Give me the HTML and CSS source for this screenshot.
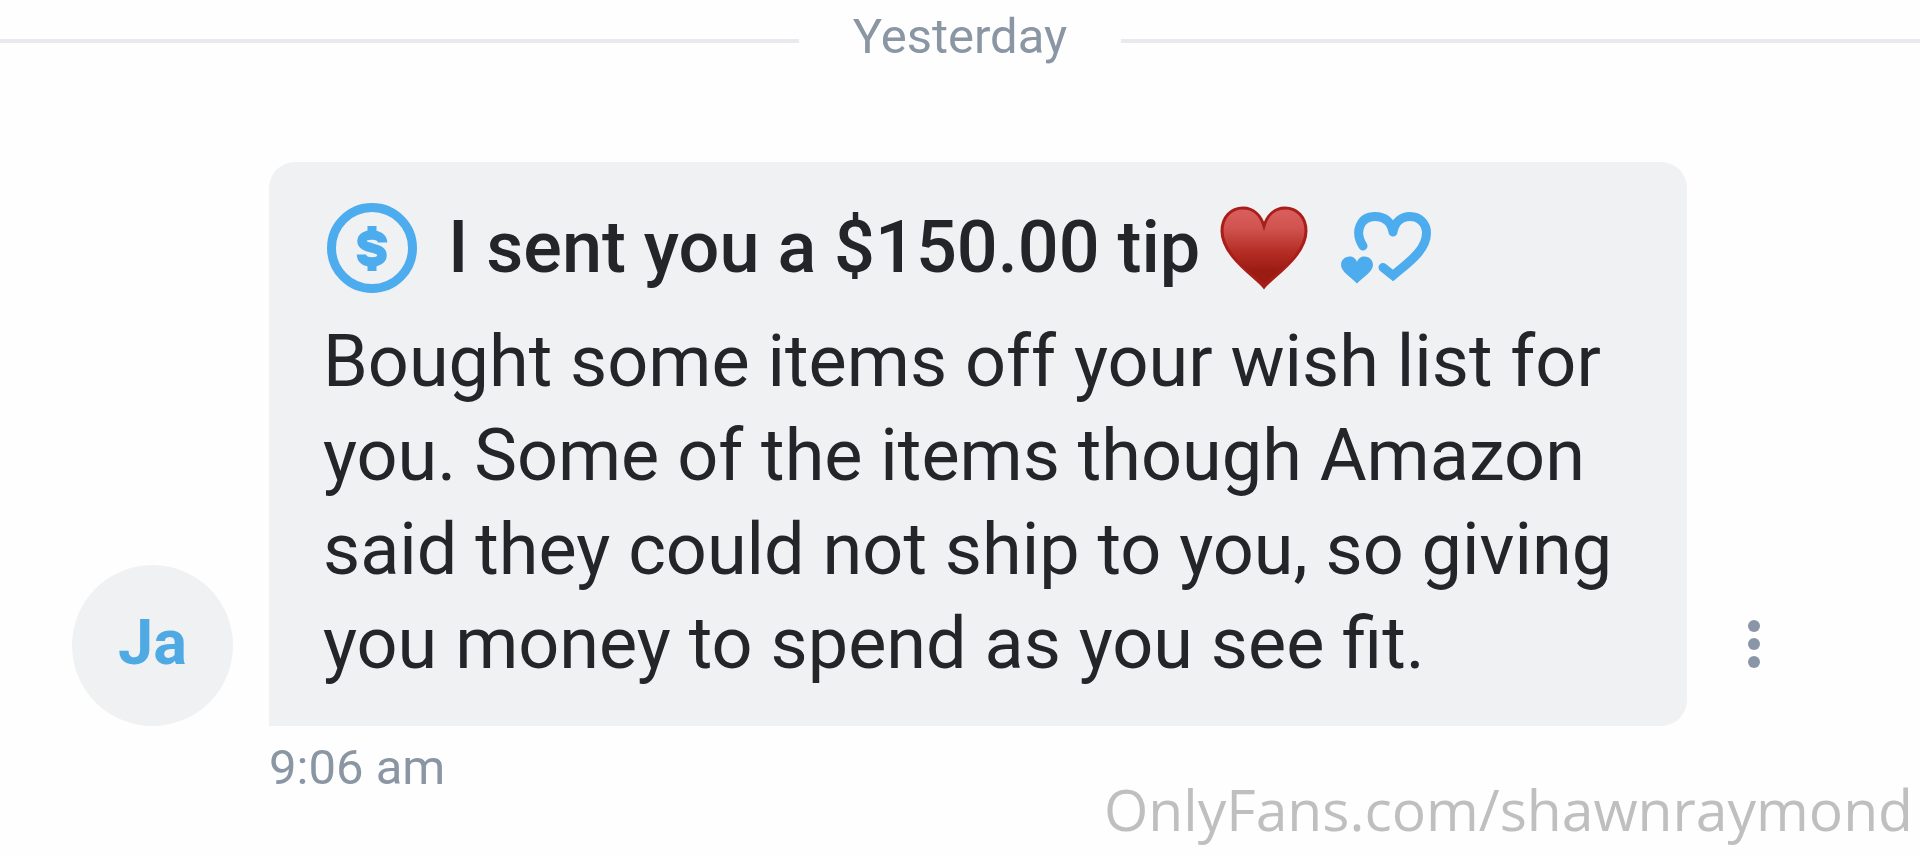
FILE: index.html
```html
<!DOCTYPE html>
<html lang="en">
<head>
    <meta charset="UTF-8" />
    <meta name="viewport" content="width=device-width, initial-scale=1.0"/>
    <title>Messages</title>
    <link rel="stylesheet" href="styles.css">
</head>
<body>

    <main class="chat">
        <div class="day-divider"><span>Yesterday</span></div>

        <article class="message">
            <a href="#" class="avatar">Ja</a>

            <div class="bubble">
                <h2 class="tip-title">
                    <svg class="icon-coin" viewBox="0 0 90 90" aria-hidden="true">
                        <circle cx="45" cy="45" r="40.5" fill="none" stroke="currentColor" stroke-width="9"/>
                        <rect x="40.5" y="23" width="9" height="8" fill="currentColor"/>
                        <rect x="40.5" y="59" width="9" height="9" fill="currentColor"/>
                        <path d="M55.5 39.5C55.5 34.5 51 32 45 32C39 32 35 34 35 38C35 46.5 55 43.5 55 52C55 56.5 51 59 45 59C38.5 59 34.5 56.5 34.5 51.5" fill="none" stroke="currentColor" stroke-width="9.5"/>
                    </svg>
                    <span>I sent you a $150.00 tip</span>
                    <svg class="icon-heart" viewBox="0 0 88 84" aria-hidden="true">
                        <defs>
                            <linearGradient id="heartFill" x1="0" y1="0" x2="0" y2="1">
                                <stop offset="0" stop-color="#d95f5f"/>
                                <stop offset="0.25" stop-color="#d15450"/>
                                <stop offset="0.55" stop-color="#b52e26"/>
                                <stop offset="0.8" stop-color="#9a1b12"/>
                                <stop offset="1" stop-color="#9c1d14"/>
                            </linearGradient>
                        </defs>
                        <path d="M44 81C36 71 2 50 2 25C2 11 11 2 23 2C34 2 41 10 44 20C47 10 54 2 65 2C77 2 86 11 86 25C86 50 52 71 44 81Z" fill="url(#heartFill)" stroke="#a91e18" stroke-width="3"/>
                    </svg>
                    <svg class="icon-hearts" viewBox="0 0 90 72" aria-hidden="true">
                        <path d="M22 34C13 20 19 4.5 34 4.5C43 4.5 50 9 52 20M52 20C54 9 61 4.5 69 4.5C79 4.5 85.5 12 85.5 21C85.5 38 68 50 52 63.5L42 55.5" fill="none" stroke="currentColor" stroke-width="9" stroke-linecap="round" stroke-linejoin="miter"/>
                        <path d="M16 71.5C11 66 0 60 0 53C0 48 4 44.5 8.5 44.5C12 44.5 15 46.5 16 50C17 46.5 20 44.5 23.5 44.5C28 44.5 32 48 32 53C32 60 21 66 16 71.5Z" fill="currentColor"/>
                    </svg>
                </h2>
                <p class="message-text">Bought some items off your wish list for you. Some of the items though Amazon said they could not ship to you, so giving you money to spend as you see fit.</p>
            </div>

            <button type="button" class="menu-button" aria-label="More options">
                <svg viewBox="0 0 12 48" aria-hidden="true">
                    <circle cx="6" cy="6" r="6"/>
                    <circle cx="6" cy="24" r="6"/>
                    <circle cx="6" cy="42" r="6"/>
                </svg>
            </button>

            <time class="message-time" datetime="09:06">9:06 am</time>
        </article>
    </main>

    <div class="watermark">OnlyFans.com/shawnraymond</div>

</body>
</html>
```
FILE: styles.css
```css
body {
    font-family: Roboto, "Liberation Sans", sans-serif;
    background: #fefefe;
    color: #242529;
    margin: 0;
}

.chat {
    padding-top: 7px;
}

.day-divider {
    display: flex;
    align-items: center;
    gap: 54px;
    color: #8a96a3;
    font-size: 49px;
    line-height: 60px;
    margin-bottom: 87px;
}

.day-divider::before,
.day-divider::after {
    content: "";
    flex: 1;
    height: 4px;
    background: #e9eaed;
}

.day-divider span {
    padding-bottom: 8px;
}

.message {
    display: grid;
    grid-template-columns: 161px 1fr 134px;
    align-items: end;
    padding: 0 99px 0 72px;
}

.avatar {
    display: flex;
    align-items: center;
    justify-content: center;
    box-sizing: border-box;
    height: 161px;
    padding-bottom: 6px;
    border-radius: 50%;
    background: #f0f1f3;
    color: #4fa9e3;
    font-size: 63px;
    font-weight: bold;
    text-decoration: none;
}

.bubble {
    margin-left: 36px;
    padding: 39px 54px 35px;
    border-radius: 26px 26px 26px 0;
    background: #f0f1f3;
    font-size: 72px;
    line-height: 94px;
}

.tip-title {
    display: flex;
    align-items: center;
    margin: 0 0 20px;
    font-size: 72px;
    font-weight: 500;
}

.icon-coin {
    width: 90px;
    height: 90px;
    margin: 0 31px 0 4px;
    color: #4dacee;
}

.icon-heart {
    width: 88px;
    height: 84px;
    margin: 0 33px 0 20px;
}

.icon-hearts {
    width: 90px;
    height: 72px;
    color: #4dacee;
}

.message-text {
    margin: 0;
}

.menu-button {
    display: flex;
    align-items: center;
    justify-content: center;
    height: 161px;
    padding: 0 0 4px;
    border: none;
    background: none;
    cursor: pointer;
}

.menu-button svg {
    width: 12px;
    height: 48px;
    fill: #8a96a8;
}

.message-time {
    grid-column: 2;
    margin: 12px 0 0 36px;
    color: #8a96a3;
    font-size: 49px;
    line-height: 60px;
}

/* stays over the chat in the corner */
.watermark {
    position: fixed;
    right: 7px;
    bottom: 6px;
    color: #bfbfbf;
    font-family: "Open Sans", "Noto Sans", sans-serif;
    font-size: 57px;
    line-height: 79px;
}
```
